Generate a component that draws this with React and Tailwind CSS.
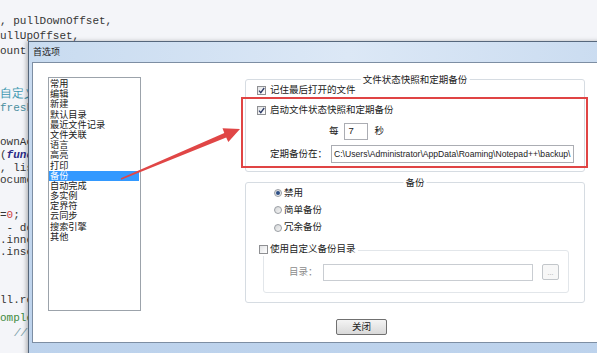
import React from 'react';

const ui = "font-['Liberation_Sans','Noto_Sans_CJK_SC',sans-serif]";

const items = ['常用', '编辑', '新建', '默认目录', '最近文件记录', '文件关联', '语言', '高亮', '打印', '备份', '自动完成', '多实例', '定界符', '云同步', '搜索引擎', '其他'];

function Check({ checked }) {
  return (
    <span className="w-[9px] h-[9px] border border-[#8f9093] bg-gradient-to-br from-[#e2e3e5] to-white flex items-center justify-center shrink-0">
      {checked && (
        <svg width="7" height="7" viewBox="0 0 7 7">
          <path d="M1 3.6 L2.8 5.6 L6.2 1" stroke="#2c3a66" strokeWidth="1.3" fill="none" />
        </svg>
      )}
    </span>
  );
}

function Radio({ on }) {
  return (
    <span className="w-[8px] h-[8px] rounded-full border border-[#9a9ea4] bg-gradient-to-br from-[#d4d6d8] to-[#f6f6f6] flex items-center justify-center shrink-0">
      {on && <span className="w-[4px] h-[4px] rounded-full bg-[#2d4f86]" />}
    </span>
  );
}

function Group({ title, className, children }) {
  return (
    <div className={`relative border border-[#d6dce2] rounded-[3px] ${className}`}>
      <span className="absolute left-1/2 -translate-x-1/2 -top-[6px] bg-white px-[2px] h-[12px] leading-[12px] whitespace-nowrap">{title}</span>
      {children}
    </div>
  );
}

function CodeBg() {
  return (
    <div className="flex flex-col font-['Liberation_Mono',monospace] text-[11px] text-[#363636] whitespace-pre">
      <div className="mt-[15px] h-[13px] leading-[13px]">, pullDownOffset,</div>
      <div className="mt-[2px] h-[13px] leading-[13px]">ullUpOffset,</div>
      <div className="mt-[2px] h-[13px] leading-[13px]">ount</div>
      <div className="mt-[30px] h-[13px] leading-[13px] text-[12px] text-[#3d97b0]">自定义</div>
      <div className="mt-[1px] h-[13px] leading-[13px] text-[#4a8fa0]">freshHeader</div>
      <div className="mt-[21px] h-[13px] leading-[13px]">ownAction</div>
      <div className="h-[13px] leading-[13px]">(<span className="italic font-bold text-[#2a2a86]">function</span></div>
      <div className="h-[13px] leading-[13px]">, listener</div>
      <div className="-mt-[1px] h-[13px] leading-[13px]">ocument</div>
      <div className="mt-[22px] h-[13px] leading-[13px]">=<span className="text-[#d04040]">0</span>;</div>
      <div className="h-[13px] leading-[13px]"> - document</div>
      <div className="-mt-[1px] h-[13px] leading-[13px]">.innerHTML</div>
      <div className="-mt-[1px] h-[13px] leading-[13px]">.insertBefore</div>
      <div className="mt-[35px] h-[13px] leading-[13px]">ll.refresh</div>
      <div className="mt-[5px] h-[13px] leading-[13px] text-[#3f8a3f]">omplete</div>
      <div className="mt-[2px] h-[13px] leading-[13px] pl-[14px] italic text-[#7aa0a8]">//</div>
    </div>
  );
}

export default function App() {
  return (
    <div className={`relative w-[597px] h-[353px] overflow-hidden bg-[#f4f5f9] ${ui}`}>
      <CodeBg />

      {/* dialog window */}
      <div className="absolute left-[28px] top-[41px] w-[640px] h-[330px] border border-[#56677c] bg-gradient-to-b from-[#cadcf1] to-[#bcd2ec] shadow-[-2px_0_4px_rgba(0,0,0,0.25)] flex flex-col">
        <div className="h-[20px] flex items-center pl-[4px] pt-[1px] text-[9px] text-[#1a1a1a] bg-gradient-to-r from-[#c8dbf0] via-[#dce8f6] to-[#c6d9ef]">首选项</div>
        <div className="ml-[3px] h-[281px] border border-[#7d8ea3] bg-white flex items-start pt-[14px] text-[9.5px] text-[#1a1a1a]">
          {/* list */}
          <div className="ml-[15px] w-[93px] h-[234px] border border-[#9ca3ab] bg-white pt-[1px] flex flex-col shrink-0 text-[9.2px]">
            {items.map(it => (
              <div
                key={it}
                className={`h-[10.2px] leading-[10.2px] pl-[1px] mr-[1px] whitespace-nowrap ${it === '备份' ? 'bg-[#3399ff] text-white' : ''}`}
              >
                {it}
              </div>
            ))}
          </div>

          {/* right side */}
          <div className="ml-[104px] mt-[2px] w-[340px] flex flex-col shrink-0">
            <Group title="文件状态快照和定期备份" className="h-[93px]">
              <div className="flex flex-col pl-[11px] pt-[4px]">
                <div className="h-[12px] flex items-center gap-[4px]"><Check checked />记住最后打开的文件</div>
                <div className="mt-[8px] h-[12px] flex items-center gap-[4px]"><Check checked />启动文件状态快照和定期备份</div>
                <div className="mt-[7px] h-[17px] flex items-center">
                  <span className="ml-[72px]">每</span>
                  <span className="ml-[5px] w-[24px] h-[17px] border border-[#abadb3] flex items-center pl-[4px]">7</span>
                  <span className="ml-[7px]">秒</span>
                </div>
                <div className="mt-[5px] h-[18px] flex items-center">
                  <span className="ml-[13px] w-[61px] whitespace-nowrap">定期备份在：</span>
                  <span className="w-[243px] h-[18px] border border-[#abadb3] flex items-center pl-[2px] overflow-hidden whitespace-nowrap text-[8.6px] text-[#222]">C:\Users\Administrator\AppData\Roaming\Notepad++\backup\</span>
                </div>
              </div>
            </Group>

            <Group title="备份" className="mt-[10px] h-[121px]">
              <div className="flex flex-col pt-[4px]">
                <div className="pl-[28px] flex flex-col gap-[5.3px]">
                  <div className="h-[12px] flex items-center gap-[2px]"><Radio on />禁用</div>
                  <div className="h-[12px] flex items-center gap-[2px]"><Radio />简单备份</div>
                  <div className="h-[12px] flex items-center gap-[2px]"><Radio />冗余备份</div>
                </div>
                <div className="relative ml-[17px] mt-[16px] w-[306px] h-[43px] border border-[#e2e6ea] rounded-[3px]">
                  <span className="absolute -left-[5px] -top-[7px] h-[12px] bg-white pr-[2px] flex items-center gap-[2px] whitespace-nowrap">
                    <Check />使用自定义备份目录
                  </span>
                  <div className="pt-[13px] pl-[25px] flex items-center h-[30px]">
                    <span className="w-[34px] text-[#8c8c8c]">目录：</span>
                    <span className="w-[210px] h-[17px] border border-[#c9cdd2]" />
                    <span className="ml-[9px] w-[17px] h-[16px] border border-[#c2c6ca] rounded-[2px] bg-[#f7f7f7] flex items-center justify-center text-[7px] text-[#a0a0a0] leading-none">...</span>
                  </div>
                </div>
              </div>
            </Group>

            <button className="ml-[91px] mt-[16px] w-[51px] h-[16px] border border-[#707070] rounded-[2px] bg-gradient-to-b from-[#f4f4f4] to-[#d9d9d9] flex items-center justify-center text-[9.5px] text-[#1a1a1a]">
              关闭
            </button>
          </div>
        </div>
      </div>

      {/* red highlight box */}
      <div className="absolute left-[241px] top-[97px] w-[347px] h-[71px] border-[2px] border-[#e04444]" />

      {/* red arrow */}
      <svg className="absolute left-0 top-0" width="597" height="353" viewBox="0 0 597 353">
        <polygon
          points="120.8,178.3 224.3,132.9 222.5,128.2 240,129 228.3,142 226.2,137.5 121.2,179.7"
          fill="#e04646"
        />
      </svg>
    </div>
  );
}
